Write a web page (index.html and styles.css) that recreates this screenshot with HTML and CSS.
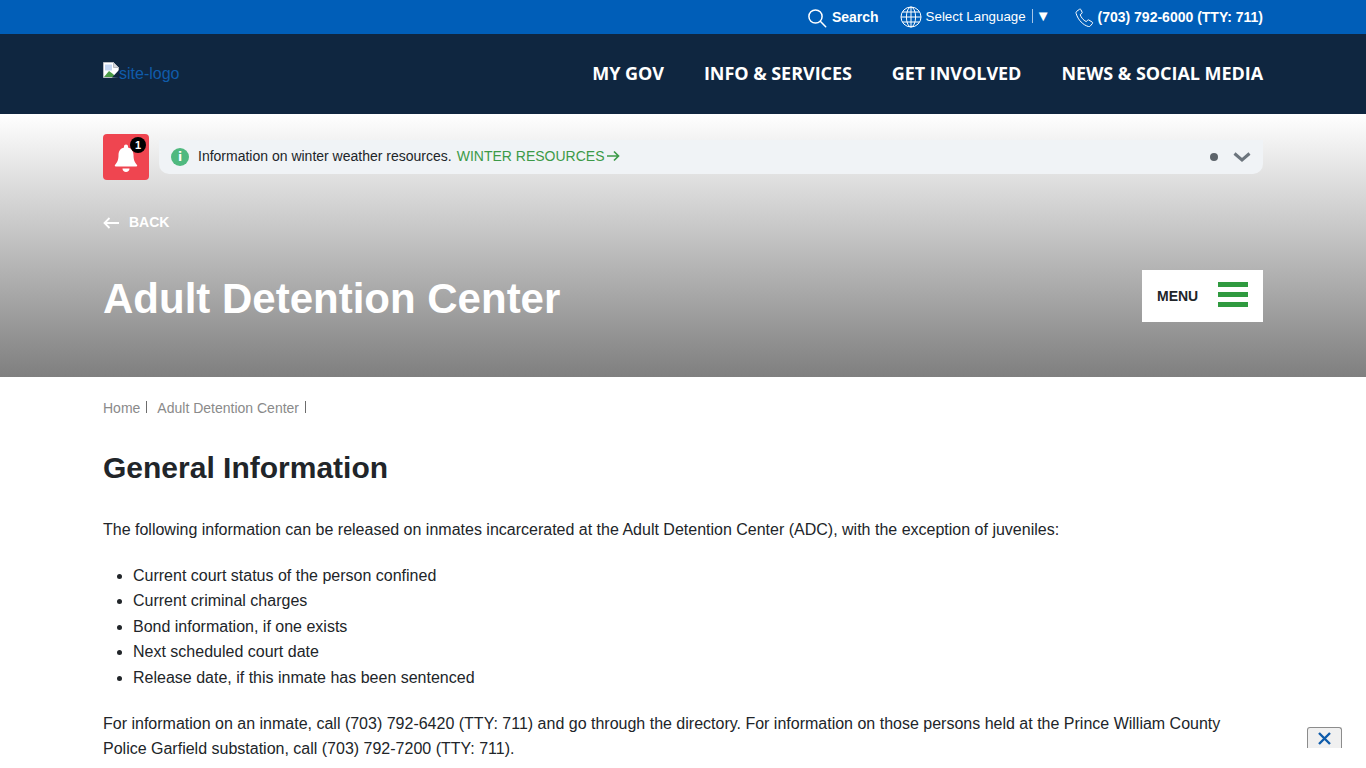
FILE: index.html
```html
<!DOCTYPE html>
<html lang="en">
<head>
    <meta charset="UTF-8">
    <meta name="viewport" content="width=device-width, initial-scale=1.0">
    <title>Adult Detention Center</title>
    <link rel="stylesheet" href="styles.css">
</head>
<body>
    <div class="top-bar">
        <div class="wrap top-bar-inner">
            <a class="top-link search-link" href="#">
                <svg width="20" height="20" viewBox="0 0 20 20" fill="none" stroke="#fff" stroke-width="1.5"><circle cx="8.5" cy="8.5" r="6.6"/><path d="M13.3 13.3l5.4 5.4" stroke-linecap="round"/></svg>
                <span>Search</span>
            </a>
            <div class="lang">
                <svg width="22" height="22" viewBox="0 0 22 22" fill="none" stroke="#fff" stroke-width="1"><circle cx="11" cy="11" r="10"/><ellipse cx="11" cy="11" rx="4.6" ry="10"/><path d="M11 1v20M1 11h20M2.400 6h17.200M2.400 16h17.200"/></svg>
                <span class="lang-text">Select Language</span>
                <span class="lang-sep"></span>
                <span class="lang-arrow">▼</span>
            </div>
            <a class="top-link phone-link" href="#">
                <svg width="19" height="19" viewBox="0 0 19 19" fill="none" stroke="#fff" stroke-width="1"><path d="M4.600 1.200L1.600 3.400c-.6.500-.7 1.300-.5 2 1.100 3.500 2.700 6.300 5 8.600 2.300 2.300 4.500 3.700 7.300 4.500.8.200 1.500 0 2-.6l2.100-2.500c.3-.4.200-.9-.2-1.200l-3.400-2.200c-.4-.2-.8-.2-1.100.1l-1.600 1.500c-1.500-.7-2.700-1.700-3.700-2.900-1-1.200-1.800-2.500-2.300-4l1.700-1.400c.3-.3.400-.7.200-1.100L5.800 1.500c-.3-.5-.8-.6-1.200-.3z" stroke-linejoin="round"/></svg>
                <span>(703) 792-6000 (TTY: 711)</span>
            </a>
        </div>
    </div>

    <header class="main-nav">
        <div class="wrap main-nav-inner">
            <a class="logo" href="#">
                <svg class="broken-img" width="16" height="16" viewBox="0 0 16 16"><path d="M.5.5h10l5 5v10H.5z" fill="#fff" stroke="#b9bcc2"/><path d="M10.500.5v5h5z" fill="#d6d8dc" stroke="#b9bcc2"/><path d="M2 2.500h7v6H2z" fill="#c4d6f2"/><path d="M1 15l5-6 4 3 3 3z" fill="#4a9a45"/><path d="M9 15.500L16 8v8z" fill="#0f2640"/></svg><span>site-logo</span>
            </a>
            <nav class="nav-links">
                <a href="#">MY GOV</a>
                <a href="#">INFO &amp; SERVICES</a>
                <a href="#">GET INVOLVED</a>
                <a href="#">NEWS &amp; SOCIAL MEDIA</a>
            </nav>
        </div>
    </header>

    <section class="hero">
        <div class="wrap">
            <div class="alert-row">
                <div class="bell">
                    <svg width="24" height="30" viewBox="0 0 24 30" fill="#fff"><path d="M12 1.500c1.200 0 2 .9 2 2v1c3.800.9 5.500 4 5.500 7.500 0 5 1.300 7.500 3.500 10 .5.600.1 1.500-.7 1.500H1.700c-.8 0-1.200-.9-.7-1.500 2.200-2.500 3.500-5 3.500-10 0-3.500 1.700-6.600 5.500-7.500v-1c0-1.100.8-2 2-2z"/><path d="M8.500 25.500h7c0 2-1.500 3.500-3.500 3.500s-3.500-1.500-3.500-3.500z"/></svg>
                    <span class="bell-count">1</span>
                </div>
                <div class="alert">
                    <span class="info-icon">i</span>
                    <span class="alert-text">Information on winter weather resources.</span>
                    <a class="alert-link" href="#">WINTER RESOURCES<svg width="14" height="12" viewBox="0 0 14 12" fill="none" stroke="#3c9a48" stroke-width="1.700"><path d="M1 6h11.500M8 1.500L12.500 6 8 10.500"/></svg></a>
                    <span class="alert-dot"></span>
                    <svg class="alert-chevron" width="18" height="10" viewBox="0 0 18 10" fill="none" stroke="#6c757d" stroke-width="3"><path d="M1.500 1.500L9 8l7.500-6.500"/></svg>
                </div>
            </div>
            <a class="back" href="#">
                <svg width="16" height="12" viewBox="0 0 16 12" fill="none" stroke="#fff" stroke-width="1.800"><path d="M16 6H1.500M6.500 1L1.500 6l5 5"/></svg>
                <span>BACK</span>
            </a>
            <div class="hero-title-row">
                <h1>Adult Detention Center</h1>
                <button class="menu-btn">
                    <span>MENU</span>
                    <span class="burger"><i></i><i></i><i></i></span>
                </button>
            </div>
        </div>
    </section>

    <main class="wrap content">
        <div class="crumbs">
            <a href="#">Home</a>
            <a href="#">Adult Detention Center</a>
        </div>
        <h2>General Information</h2>
        <p>The following information can be released on inmates incarcerated at the Adult Detention Center (ADC), with the exception of juveniles:</p>
        <ul>
            <li>Current court status of the person confined</li>
            <li>Current criminal charges</li>
            <li>Bond information, if one exists</li>
            <li>Next scheduled court date</li>
            <li>Release date, if this inmate has been sentenced</li>
        </ul>
        <p>For information on an inmate, call (703) 792-6420 (TTY: 711) and go through the directory. For information on those persons held at the Prince William County Police Garfield substation, call (703) 792-7200 (TTY: 711).</p>
    </main>

    <button class="float-close" aria-label="Close">
        <svg width="13" height="13" viewBox="0 0 13 13" fill="none" stroke="#0f5cab" stroke-width="2.400"><path d="M1 1l11 11M12 1L1 12"/></svg>
    </button>
</body>
</html>
```

FILE: styles.css
```css
* {
    box-sizing: border-box;
}

html, body {
    height: 768px;
    overflow: hidden;
}

body {
    margin: 0;
    font-family: "Liberation Sans", Arial, sans-serif;
    font-size: 16px;
    color: #212529;
    background-color: #fff;
}

a {
    text-decoration: none;
}

.wrap {
    width: 1160px;
    margin: 0 auto;
}

/* top blue strip */
.top-bar {
    height: 34px;
    background-color: #005eb8;
}

.top-bar-inner {
    height: 100%;
    display: flex;
    justify-content: flex-end;
    align-items: center;
}

.top-link {
    display: flex;
    align-items: center;
    color: #fff;
    font-size: 14px;
    font-weight: bold;
}

.search-link {
    gap: 5px;
}

.search-link svg {
    margin-top: 2px;
}

.lang {
    display: flex;
    align-items: center;
    margin-left: 21px;
    color: #fff;
    font-size: 13.33px;
}

.lang svg {
    margin-right: 4px;
}

.lang-text {
    position: relative;
    top: -1px;
}

.lang-sep {
    width: 1px;
    height: 14px;
    margin: 0 3px 2px 6px;
    background-color: #a8c6e6;
}

.lang-arrow {
    font-size: 15px;
    position: relative;
    top: -2px;
}

.phone-link {
    margin-left: 24px;
    gap: 4px;
}

/* main navigation */
.main-nav {
    height: 80px;
    background-color: #0f2640;
}

.main-nav-inner {
    height: 100%;
    display: flex;
    justify-content: space-between;
    align-items: center;
}

.logo {
    display: flex;
    align-items: flex-start;
    color: #0f5cab;
    font-size: 16px;
    height: 24px;
}

.logo span {
    padding-top: 3px;
}

.nav-links {
    display: flex;
    gap: 40px;
    margin-top: -2px;
}

.nav-links a {
    color: #fff;
    font-family: "Open Sans", sans-serif;
    font-size: 18px;
    font-weight: 700;
    letter-spacing: -0.05px;
}

/* hero with the alert, back link and page title */
.hero {
    height: 263px;
    background: linear-gradient(to bottom, #ffffff 0%, #7f7f7f 100%);
    padding-top: 20px;
}

.alert-row {
    display: flex;
    gap: 10px;
    align-items: flex-start;
}

.bell {
    position: relative;
    width: 46px;
    height: 46px;
    border-radius: 4px;
    background-color: #ef4550;
    display: flex;
    align-items: center;
    justify-content: center;
}

.bell svg {
    margin-top: 2px;
}

.bell-count {
    position: absolute;
    top: 3px;
    right: 3px;
    width: 16px;
    height: 16px;
    border-radius: 50%;
    background-color: #000;
    color: #fff;
    font-size: 11px;
    font-weight: bold;
    line-height: 16px;
    text-align: center;
}

.alert {
    flex: 1;
    height: 34px;
    margin-top: 6px;
    padding: 0 12px;
    display: flex;
    align-items: center;
    border-radius: 0 0 10px 10px;
    background-color: #f0f3f6;
    font-size: 14px;
}

.info-icon {
    width: 18px;
    height: 18px;
    border-radius: 50%;
    background-color: #4fb97f;
    color: #fff;
    font-family: "DejaVu Sans", sans-serif;
    font-size: 12px;
    font-weight: bold;
    line-height: 18px;
    text-align: center;
}

.alert-text {
    margin-left: 9px;
    margin-bottom: 2px;
    color: #212529;
}

.alert-link {
    margin-left: 5px;
    margin-bottom: 2px;
    color: #3c9a48;
    display: flex;
    align-items: center;
    gap: 2px;
}

.alert-dot {
    width: 8px;
    height: 8px;
    margin-left: auto;
    margin-right: -1px;
    border-radius: 50%;
    background-color: #5c636a;
}

.alert-chevron {
    margin-left: 16px;
}

.back {
    display: flex;
    align-items: center;
    gap: 10px;
    margin-top: 34px;
    color: #fff;
    font-size: 14px;
    font-weight: bold;
}

.back svg {
    margin-top: 2px;
}

.hero-title-row {
    display: flex;
    justify-content: space-between;
    align-items: flex-start;
    margin-top: 40px;
}

.hero h1 {
    margin: 0;
    margin-top: 4px;
    color: #fff;
    font-size: 42px;
    line-height: 50px;
    font-weight: bold;
}

.menu-btn {
    width: 121px;
    height: 52px;
    padding: 0 15px;
    display: flex;
    align-items: center;
    justify-content: space-between;
    border: none;
    background-color: #fff;
    color: #212529;
    font-family: inherit;
    font-size: 14px;
    font-weight: bold;
}

.burger {
    display: flex;
    flex-direction: column;
    gap: 5px;
    margin-bottom: 3px;
}

.burger i {
    display: block;
    width: 30px;
    height: 5px;
    background-color: #2f9a3f;
}

/* page body */
.content {
    padding-top: 23px;
}

.crumbs {
    display: flex;
    gap: 10px;
    font-size: 14px;
    line-height: 16px;
}

.crumbs a {
    color: #8a8a8a;
    padding-right: 7px;
    position: relative;
}

.crumbs a::after {
    content: "";
    position: absolute;
    right: 0;
    top: 1px;
    width: 1px;
    height: 12px;
    background-color: #6c6c6c;
}

.content h2 {
    margin: 34px 0 0;
    font-size: 30px;
    line-height: 36px;
    font-weight: bold;
}

.content p {
    margin: 31px 0 0;
    line-height: 25.600px;
}

.content ul {
    margin: 20px 0 0;
    padding-left: 30px;
}

.content li {
    line-height: 25.600px;
}

.content ul + p {
    margin-top: 20px;
}

.float-close {
    position: fixed;
    right: 24px;
    bottom: 20px;
    width: 35px;
    height: 21px;
    padding: 0;
    display: flex;
    align-items: center;
    justify-content: center;
    border: 1px solid #8c8c8c;
    border-bottom: none;
    border-radius: 3px 3px 0 0;
    background-color: #f0f0f0;
}
```
